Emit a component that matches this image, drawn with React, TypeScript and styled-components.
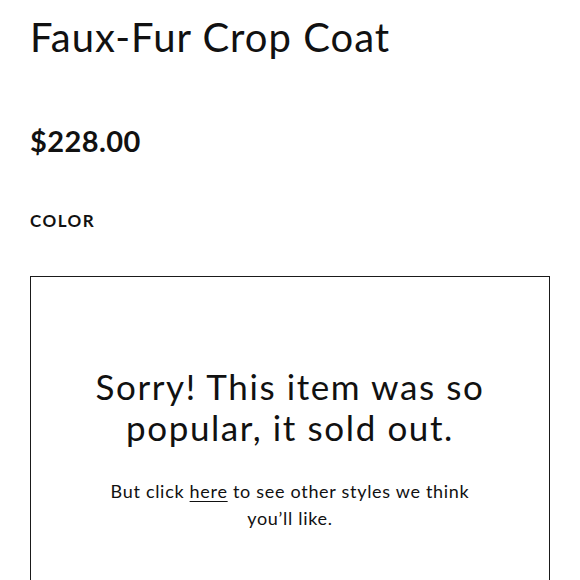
import React from "react";
import styled, { createGlobalStyle } from "styled-components";

const Global = createGlobalStyle`
  html, body { margin: 0; padding: 0; background: #fff; }
  body { font-family: Lato, "Noto Sans", sans-serif; color: #111; }
`;

const Page = styled.main`
  padding: 11px 30px 0 30px;
  display: flex;
  flex-direction: column;
`;

const Title = styled.h1`
  margin: 0;
  font-size: 40px;
  font-weight: 400;
  line-height: 52px;
  letter-spacing: 1px;
`;

const Price = styled.div`
  margin-top: 60px;
  font-size: 29px;
  font-weight: 700;
  line-height: 36px;
  letter-spacing: 0.4px;
`;

const Label = styled.div`
  margin-top: 52px;
  font-size: 17px;
  font-weight: 700;
  letter-spacing: 1.5px;
  line-height: 20px;
`;

const SoldOutBox = styled.section`
  margin-top: 45px;
  border: 1.5px solid #1a1a1a;
  border-bottom: none;
  height: 320px;
  display: flex;
  flex-direction: column;
  align-items: center;
  padding: 89px 30px 0;
  box-sizing: border-box;
  text-align: center;
`;

const Headline = styled.h2`
  margin: 0;
  font-size: 35px;
  font-weight: 400;
  line-height: 41px;
  letter-spacing: 1.6px;
`;

const Note = styled.p`
  margin: 30px 0 0;
  font-size: 18px;
  line-height: 27px;
  max-width: 380px;
  letter-spacing: 0.7px;
`;

const Link = styled.a`
  color: inherit;
  text-decoration: underline;
  text-underline-offset: 3px;
`;

export default function App() {
  return (
    <>
      <Global />
      <Page>
        <Title>Faux-Fur Crop Coat</Title>
        <Price>$228.00</Price>
        <Label>COLOR</Label>
        <SoldOutBox>
          <Headline>
            Sorry! This item was so
            <br />
            popular, it sold out.
          </Headline>
          <Note>
            But click <Link href="#">here</Link> to see other styles we think you’ll like.
          </Note>
        </SoldOutBox>
      </Page>
    </>
  );
}
